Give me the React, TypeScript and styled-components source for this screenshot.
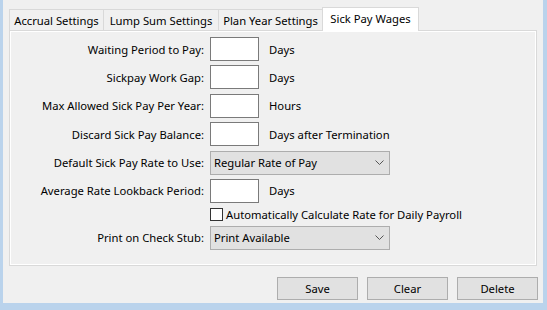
import { createGlobalStyle, styled } from 'styled-components';

const GlobalStyle = createGlobalStyle`
  html, body {
    margin: 0;
    padding: 0;
    background: #bad3ec;
  }
  * {
    box-sizing: border-box;
  }
`;

const Window = styled.div`
  width: 547px;
  height: 310px;
  display: flex;
  flex-direction: column;
  background: #f0f0f0;
  border-left: 3px solid #bad3ec;
  border-right: 4px solid #bad3ec;
  border-bottom: 7px solid #bad3ec;
  padding: 6px 6px 0 6px;
  font-family: 'Noto Sans', 'Open Sans', sans-serif;
  font-size: 11.25px;
  color: #000;
`;

const TabBar = styled.div`
  display: flex;
  align-items: flex-end;
  height: 24px;
  padding-left: 1px;
  position: relative;
  z-index: 1;
`;

const Tab = styled.div<{ $active?: boolean; $width: number }>`
  width: ${(p) => p.$width}px;
  height: ${(p) => (p.$active ? 24 : 21)}px;
  display: flex;
  align-items: center;
  justify-content: center;
  padding-bottom: ${(p) => (p.$active ? 2 : 0)}px;
  background: ${(p) => (p.$active ? '#fff' : '#f0f0f0')};
  border: 1px solid #d9d9d9;
  border-bottom: none;
  margin-left: -1px;
  margin-bottom: ${(p) => (p.$active ? -1 : 0)}px;
  white-space: nowrap;
`;

const Panel = styled.div`
  height: 236px;
  border: 1px solid #d9d9d9;
  box-shadow: inset 0 0 0 1px #fff;
  padding-top: 6px;
  display: flex;
  flex-direction: column;
  gap: 4.4px;
`;

const Row = styled.div<{ $height?: number }>`
  display: grid;
  grid-template-columns: 194px auto;
  column-gap: 6px;
  align-items: center;
  height: ${(p) => p.$height ?? 24}px;
`;

const Label = styled.div`
  text-align: right;
  white-space: nowrap;
`;

const Field = styled.div`
  display: flex;
  align-items: center;
  gap: 10px;
  white-space: nowrap;
`;

const TextBox = styled.div`
  width: 49px;
  height: 24px;
  background: #fff;
  border: 1px solid #7a7a7a;
`;

const Select = styled.div`
  width: 180px;
  height: 24px;
  background: #e1e1e1;
  border: 1px solid #adadad;
  display: flex;
  align-items: center;
  justify-content: space-between;
  padding: 0 5px 0 3px;
`;

const CheckBox = styled.div`
  width: 13px;
  height: 13px;
  background: #fff;
  border: 1px solid #333;
`;

const CheckField = styled.div`
  display: flex;
  align-items: center;
  gap: 3px;
  white-space: nowrap;
`;

const ButtonRow = styled.div`
  display: flex;
  justify-content: flex-end;
  gap: 9px;
  margin-top: 11px;
  margin-right: -1px;
`;

const Button = styled.div`
  width: 81px;
  height: 23px;
  background: #e1e1e1;
  border: 1px solid #adadad;
  display: flex;
  align-items: center;
  justify-content: center;
`;

const Chevron = () => (
  <svg width="9" height="5" viewBox="0 0 9 5">
    <path d="M0.5 0.5 L4.5 4.5 L8.5 0.5" fill="none" stroke="#555" strokeWidth="1" />
  </svg>
);

const tabs = [
  { name: 'Accrual Settings', width: 95 },
  { name: 'Lump Sum Settings', width: 116 },
  { name: 'Plan Year Settings', width: 105 },
  { name: 'Sick Pay Wages', width: 97, active: true },
];

export default function App() {
  return (
    <>
      <GlobalStyle />
      <Window>
        <TabBar>
          {tabs.map((t) => (
            <Tab key={t.name} $active={t.active} $width={t.width}>
              {t.name}
            </Tab>
          ))}
        </TabBar>
        <Panel>
          <Row>
            <Label>Waiting Period to Pay:</Label>
            <Field>
              <TextBox />
              Days
            </Field>
          </Row>
          <Row>
            <Label>Sickpay Work Gap:</Label>
            <Field>
              <TextBox />
              Days
            </Field>
          </Row>
          <Row>
            <Label>Max Allowed Sick Pay Per Year:</Label>
            <Field>
              <TextBox />
              Hours
            </Field>
          </Row>
          <Row>
            <Label>Discard Sick Pay Balance:</Label>
            <Field>
              <TextBox />
              Days after Termination
            </Field>
          </Row>
          <Row>
            <Label>Default Sick Pay Rate to Use:</Label>
            <Field>
              <Select>
                Regular Rate of Pay
                <Chevron />
              </Select>
            </Field>
          </Row>
          <Row>
            <Label>Average Rate Lookback Period:</Label>
            <Field>
              <TextBox />
              Days
            </Field>
          </Row>
          <Row $height={14}>
            <Label />
            <CheckField>
              <CheckBox />
              Automatically Calculate Rate for Daily Payroll
            </CheckField>
          </Row>
          <Row>
            <Label>Print on Check Stub:</Label>
            <Field>
              <Select>
                Print Available
                <Chevron />
              </Select>
            </Field>
          </Row>
        </Panel>
        <ButtonRow>
          <Button>Save</Button>
          <Button>Clear</Button>
          <Button>Delete</Button>
        </ButtonRow>
      </Window>
    </>
  );
}
